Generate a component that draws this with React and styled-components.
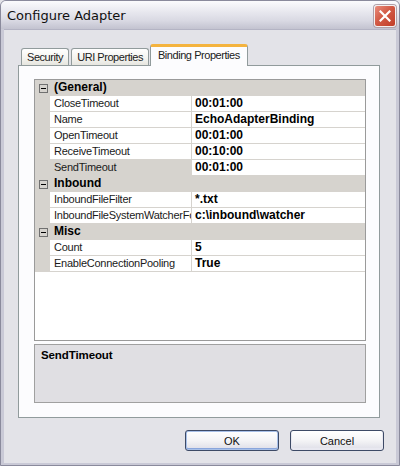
import React from "react";
import styled, { createGlobalStyle, css } from "styled-components";

const Global = createGlobalStyle`
  html, body { margin: 0; padding: 0; background: #e3e3e8; }
  * { box-sizing: border-box; }
`;

const Window = styled.div`
  width: 400px;
  height: 466px;
  display: flex;
  flex-direction: column;
  background: #c9c9d6;
  border: 1px solid #8a8a9c;
  border-top-left-radius: 6px;
  border-top-right-radius: 6px;
  overflow: hidden;
  font-family: "Liberation Sans", Arial, sans-serif;
`;

const TitleBar = styled.div`
  height: 28px;
  flex: none;
  display: flex;
  align-items: center;
  justify-content: space-between;
  padding: 0 3px 0 6px;
  background: linear-gradient(#fbfbfd 0%, #ececf2 30%, #d9d9e3 70%, #c3c3d0 100%);
`;

const Title = styled.span`
  font-family: "DejaVu Sans", sans-serif;
  font-size: 13px;
  color: #101010;
  padding-top: 1px;
`;

const CloseBtn = styled.div`
  width: 22px;
  height: 22px;
  border-radius: 3px;
  border: 1px solid #f4f0f0;
  background: linear-gradient(135deg, #e98c7c 0%, #d25a45 45%, #c13d28 100%);
  display: flex;
  align-items: center;
  justify-content: center;
  margin-top: 2px;
  box-shadow: 0 0 0 1px #b0a0a8;
`;

const Body = styled.div`
  flex: 1;
  display: flex;
  flex-direction: column;
  margin: 0 3px 3px 3px;
  background: #e3e3e8;
  padding: 14px 16px 12px 14px;
  border-top: 1px solid #b4b4c4;
`;

const TabRow = styled.div`
  height: 21px;
  display: flex;
  align-items: flex-end;
  padding-left: 3px;
  gap: 2px;
  position: relative;
  z-index: 2;
`;

const Tab = styled.div`
  height: 17px;
  padding: 0 5px;
  display: flex;
  align-items: center;
  font-size: 11px;
  letter-spacing: -0.45px;
  color: #202020;
  border: 1px solid #919b9c;
  border-bottom: none;
  border-radius: 3px 3px 0 0;
  background: linear-gradient(#ffffff, #f3f3ef 60%, #e6e5df);
  ${(p) =>
    p.$active &&
    css`
      height: 22px;
      margin-bottom: -1px;
      margin-left: -1px;
      padding: 0 7px 3px 7px;
      background: #fcfcfe;
      border-top: 3px solid #f4b33e;
    `}
`;

const Panel = styled.div`
  height: 353px;
  flex: none;
  display: flex;
  flex-direction: column;
  background: #fcfcfe;
  border: 1px solid #919b9c;
  padding: 13px 13px 14px 15px;
`;

const Grid = styled.div`
  flex: 1;
  display: flex;
  flex-direction: column;
  background: #ffffff;
  border: 1px solid #9a9a9a;
  font-size: 11px;
`;

const Row = styled.div`
  height: 16px;
  display: grid;
  grid-template-columns: 15px 142px 1fr;
  background: #ffffff;
`;

const Margin = styled.div`
  background: #d6d3ce;
  display: flex;
  align-items: center;
  justify-content: center;
`;

const Toggle = styled.div`
  width: 9px;
  height: 9px;
  border: 1px solid #707070;
  position: relative;
  margin-left: 1px;
  &::after {
    content: "";
    position: absolute;
    left: 1px;
    right: 1px;
    top: 3px;
    height: 1px;
    background: #000;
  }
`;

const CatLabel = styled.div`
  grid-column: 2 / 4;
  background: #d6d3ce;
  font-size: 12px;
  font-weight: bold;
  color: #000;
  padding-left: 4px;
  line-height: 15px;
  border-bottom: 1px solid #d6d3ce;
`;

const NameCell = styled.div`
  padding-left: 4px;
  line-height: 15px;
  letter-spacing: -0.25px;
  color: #1a1a1a;
  white-space: nowrap;
  overflow: hidden;
  border-right: 1px solid #d6d3ce;
  border-bottom: 1px solid #d6d3ce;
  background: ${(p) => (p.$selected ? "#d6d3ce" : "#ffffff")};
`;

const ValueCell = styled.div`
  padding-left: 3px;
  line-height: 15px;
  font-size: 12px;
  font-weight: bold;
  color: #000;
  white-space: nowrap;
  overflow: hidden;
  border-bottom: 1px solid #d6d3ce;
`;

const Desc = styled.div`
  height: 59px;
  flex: none;
  margin-top: 3px;
  background: #e0dfe3;
  border: 1px solid #a0a0a0;
  padding: 4px 6px;
  font-size: 11.5px;
  font-weight: bold;
  letter-spacing: -0.1px;
  color: #000;
`;

const Footer = styled.div`
  display: flex;
  justify-content: flex-end;
  gap: 11px;
  margin-top: 12px;
  margin-right: -4px;
`;

const Button = styled.button`
  width: 94px;
  height: 21px;
  font-family: "Liberation Sans", Arial, sans-serif;
  font-size: 11px;
  color: #101010;
  border: 1px solid #3d4a66;
  border-radius: 3px;
  background: linear-gradient(#ffffff, #f4f4f6 50%, #e2e2ea 90%, #d4d4de);
  box-shadow: ${(p) =>
    p.$default ? "inset 0 0 0 1px #a8c0e8, inset 0 -1px 0 1px #8aa6dc" : "inset 0 -1px 0 1px #e8e8f0"};
  padding: 0;
`;

const groups = [
  {
    name: "(General)",
    props: [
      ["CloseTimeout", "00:01:00"],
      ["Name", "EchoAdapterBinding"],
      ["OpenTimeout", "00:01:00"],
      ["ReceiveTimeout", "00:10:00"],
      ["SendTimeout", "00:01:00", true],
    ],
  },
  {
    name: "Inbound",
    props: [
      ["InboundFileFilter", "*.txt"],
      ["InboundFileSystemWatcherFolder", "c:\\inbound\\watcher"],
    ],
  },
  {
    name: "Misc",
    props: [
      ["Count", "5"],
      ["EnableConnectionPooling", "True"],
    ],
  },
];

export default function App() {
  return (
    <>
      <Global />
      <Window>
        <TitleBar>
          <Title>Configure Adapter</Title>
          <CloseBtn>
            <svg width="12" height="12" viewBox="0 0 12 12">
              <path d="M1.5 1.5 L10.5 10.5 M10.5 1.5 L1.5 10.5" stroke="#fff" strokeWidth="2.2" strokeLinecap="square" />
            </svg>
          </CloseBtn>
        </TitleBar>
        <Body>
          <TabRow>
            <Tab>Security</Tab>
            <Tab>URI Properties</Tab>
            <Tab $active>Binding Properties</Tab>
          </TabRow>
          <Panel>
            <Grid>
              {groups.map((g) => (
                <React.Fragment key={g.name}>
                  <Row>
                    <Margin>
                      <Toggle />
                    </Margin>
                    <CatLabel>{g.name}</CatLabel>
                  </Row>
                  {g.props.map(([n, v, sel]) => (
                    <Row key={n}>
                      <Margin />
                      <NameCell $selected={sel}>{n}</NameCell>
                      <ValueCell>{v}</ValueCell>
                    </Row>
                  ))}
                </React.Fragment>
              ))}
            </Grid>
            <Desc>SendTimeout</Desc>
          </Panel>
          <Footer>
            <Button $default>OK</Button>
            <Button>Cancel</Button>
          </Footer>
        </Body>
      </Window>
    </>
  );
}
